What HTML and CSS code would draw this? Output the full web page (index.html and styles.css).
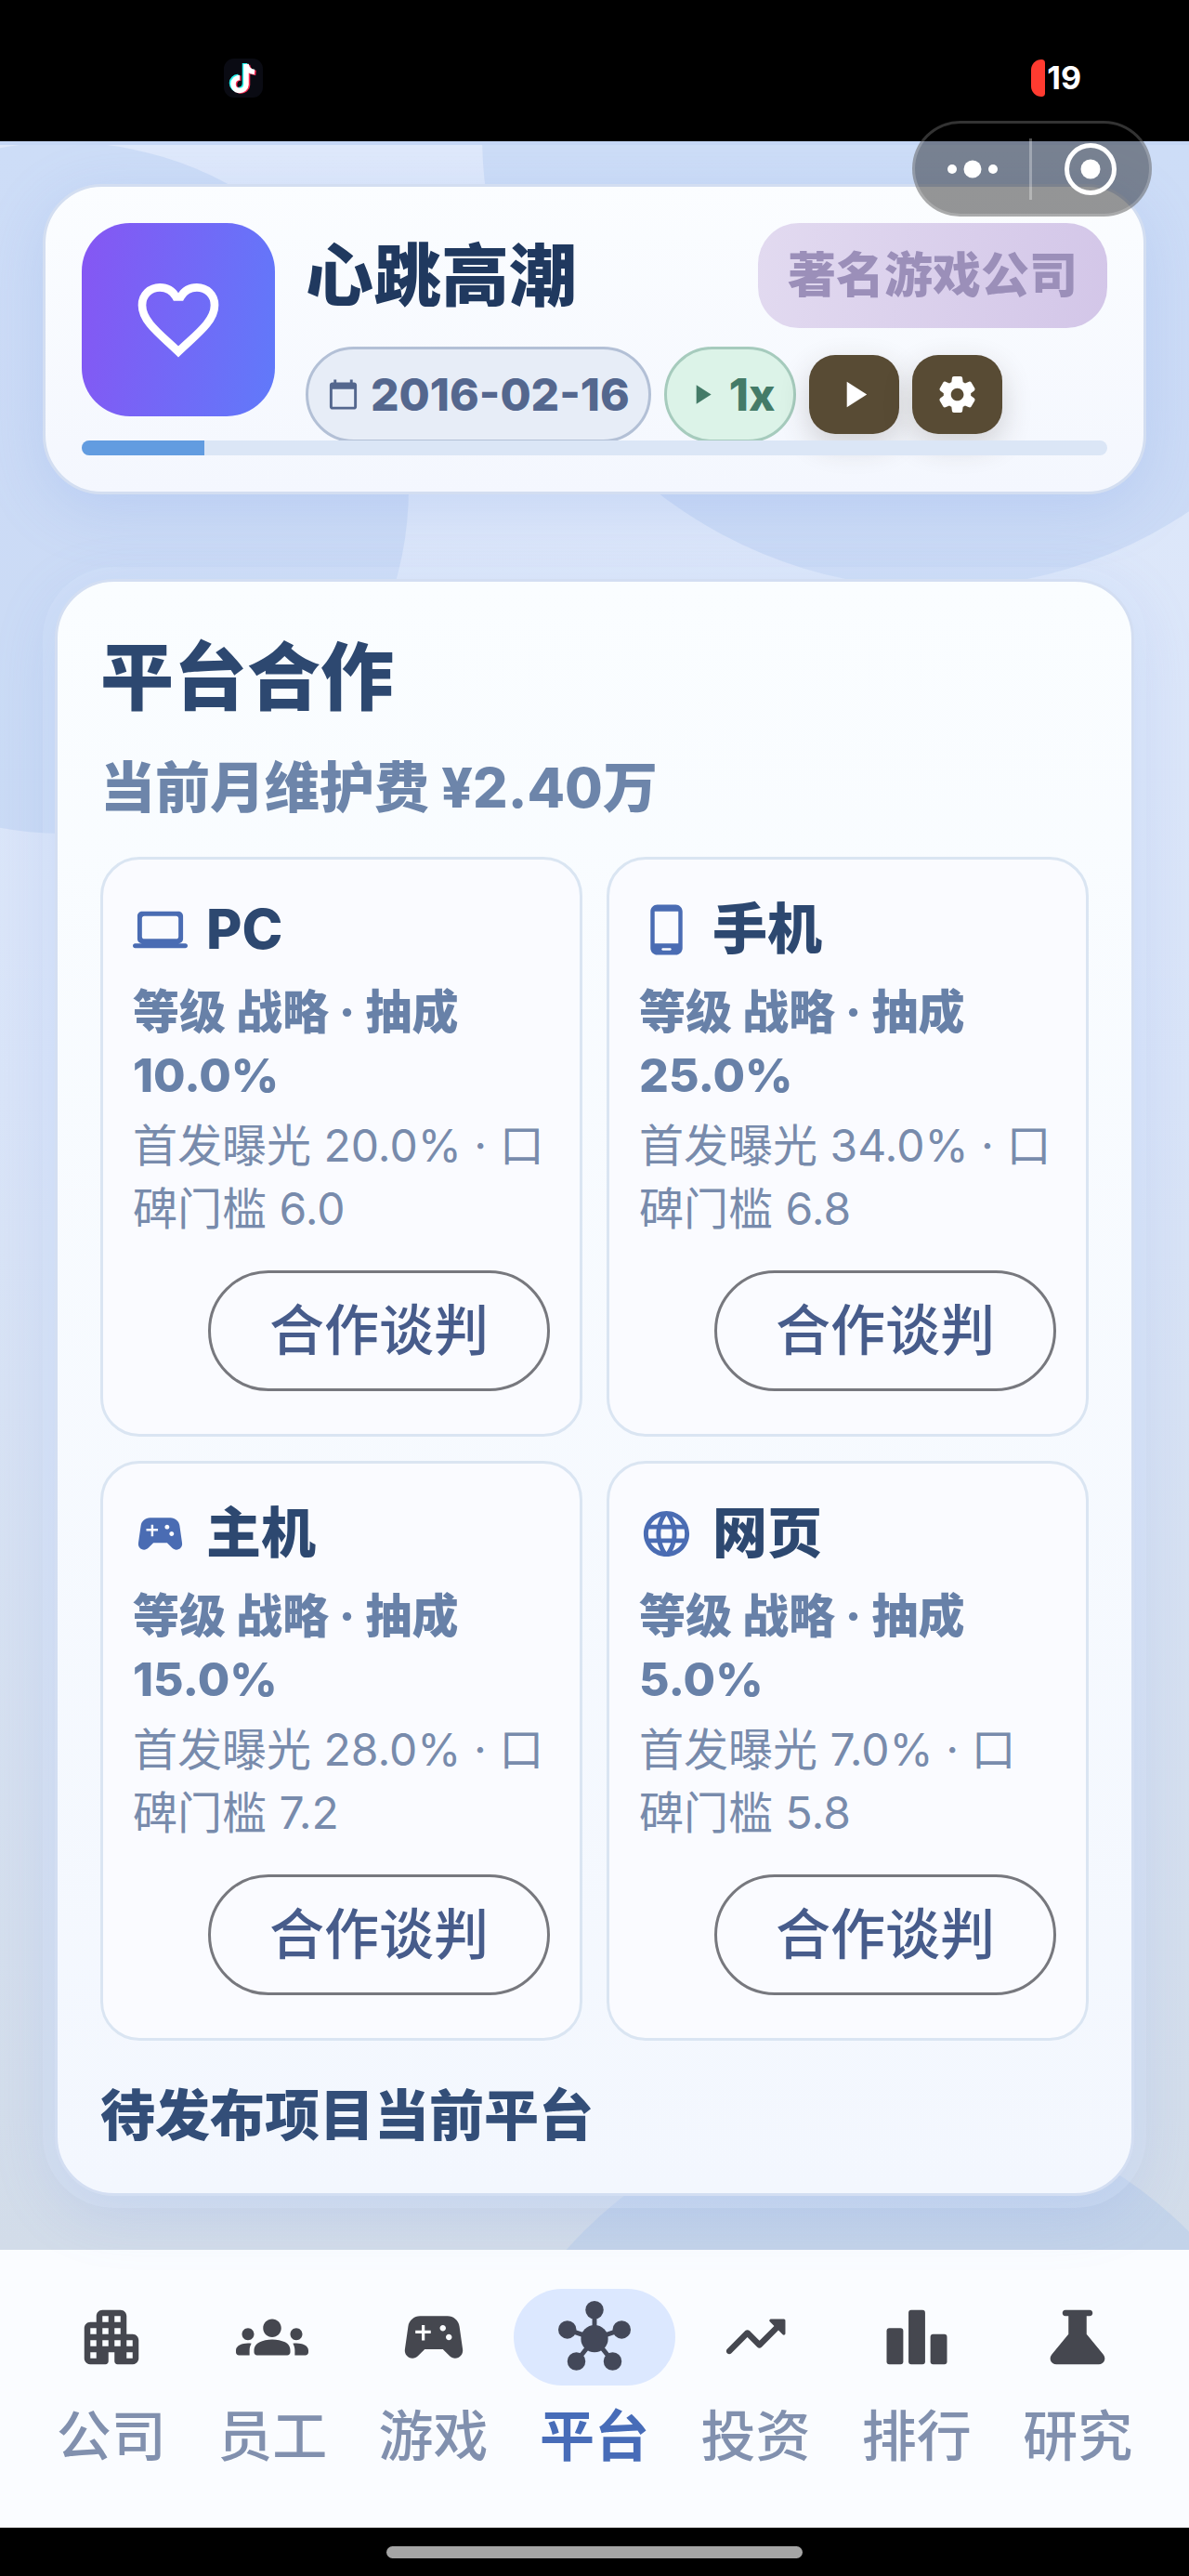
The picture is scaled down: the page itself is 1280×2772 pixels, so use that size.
FILE: index.html
```html
<!DOCTYPE html>
<html lang="zh-CN">
<head>
    <meta charset="UTF-8">
    <meta name="viewport" content="width=device-width, initial-scale=1.0">
    <title>平台合作</title>
    <link rel="stylesheet" href="styles.css">
</head>
<body>
    <!-- Shared icon shapes -->
    <svg class="icon-defs" aria-hidden="true">
        <symbol id="icon-gamepad" viewBox="0 0 24 24">
            <path fill-rule="evenodd" d="M21.58 16.09l-1.09-7.66C20.21 6.46 18.52 5 16.53 5H7.47C5.48 5 3.79 6.46 3.51 8.43l-1.09 7.66C2.2 17.63 3.39 19 4.94 19c.68 0 1.32-.27 1.8-.75L9 16h6l2.25 2.25c.48.48 1.13.75 1.8.75 1.56 0 2.75-1.37 2.53-2.91zM11 10.8H9v2.3H8v-2.3H5.9v-1H8V8h1v1.8h2v1zM15 10c-.55 0-1-.45-1-1s.45-1 1-1 1 .45 1 1-.45 1-1 1zm2 3c-.55 0-1-.45-1-1s.45-1 1-1 1 .45 1 1-.45 1-1 1z"/>
        </symbol>
        <symbol id="icon-play" viewBox="0 0 24 24">
            <path d="M8 5v14l11-7z"/>
        </symbol>
    </svg>

    <div class="screen">
        <div class="status-bar">
            <svg class="tiktok" viewBox="0 0 42 42" role="img" aria-label="抖音">
                <rect width="42" height="42" rx="11" fill="#0a0b13"/>
                <g fill="none" stroke-width="5.5">
                    <path stroke="#25f4ee" d="M22.5 5v22a7 7 0 1 1-7-7.5M22.5 6c.5 5 4 8 9 8.500"/>
                    <path stroke="#fe2c55" d="M25.500 7v21.500a7 7 0 1 1-7-7.500M25.500 7c.5 5 4 8 9 8.500"/>
                    <path stroke="#fff" d="M24 6v22a7 7 0 1 1-7-7.500M24 6c.5 5 4 8 9 8.500"/>
                </g>
            </svg>
            <div class="battery"><span class="battery-level"></span>19</div>
        </div>

        <main class="stage">
            <div class="backdrop" aria-hidden="true">
                <span class="bubble bubble-left"></span>
                <span class="bubble bubble-right"></span>
                <span class="bubble bubble-bottom"></span>
            </div>

            <header class="company">
                <div class="company-top">
                    <div class="avatar">
                        <svg viewBox="0 0 24 24" aria-hidden="true"><path d="M12 19.950C8 16 3 12.600 3 8.400 3 5.800 5 4 7.400 4c1.700 0 3.200.9 4 2.300h1.200c.8-1.400 2.300-2.300 4-2.300C19 4 21 5.800 21 8.400c0 4.200-5 7.600-9 11.550z"/></svg>
                    </div>
                    <div class="company-info">
                        <div class="name-row">
                            <h1>心跳高潮</h1>
                            <span class="rank">著名游戏公司</span>
                        </div>
                        <div class="chip-row">
                            <span class="chip chip-date">
                                <svg viewBox="0 0 24 24" aria-hidden="true"><path fill-rule="evenodd" d="M20 3h-1V1h-2v2H7V1H5v2H4c-1.100 0-2 .9-2 2v16c0 1.100.9 2 2 2h16c1.100 0 2-.9 2-2V5c0-1.100-.9-2-2-2zm0 18H4V8h16v13z"/></svg>
                                2016-02-16
                            </span>
                            <span class="chip chip-speed">
                                <svg aria-hidden="true"><use href="#icon-play"/></svg>
                                1x
                            </span>
                            <button class="square-btn" type="button" aria-label="播放">
                                <svg aria-hidden="true"><use href="#icon-play"/></svg>
                            </button>
                            <button class="square-btn" type="button" aria-label="设置">
                                <svg viewBox="0 0 24 24" aria-hidden="true"><path fill-rule="evenodd" d="M19.500 12c0-.23-.01-.45-.03-.68l1.860-1.410c.4-.3.51-.86.26-1.300l-1.870-3.230c-.25-.44-.79-.62-1.250-.42l-2.150.91c-.37-.26-.76-.49-1.170-.68l-.29-2.310C14.800 2.380 14.370 2 13.870 2h-3.730c-.51 0-.94.38-1 .88l-.29 2.310c-.41.19-.8.42-1.170.68l-2.150-.91c-.46-.2-1-.02-1.250.42L2.410 8.620c-.25.44-.14.99.26 1.300l1.860 1.410C4.510 11.550 4.500 11.770 4.500 12s.01.45.03.68l-1.860 1.410c-.4.3-.51.86-.26 1.300l1.870 3.230c.25.44.79.62 1.250.42l2.150-.91c.37.26.76.49 1.170.68l.29 2.310c.06.5.49.88.99.88h3.730c.5 0 .93-.38.99-.88l.29-2.310c.41-.19.8-.42 1.170-.68l2.150.91c.46.2 1 .02 1.250-.42l1.870-3.230c.25-.44.14-.99-.26-1.300l-1.860-1.410c.03-.23.04-.45.04-.68zm-7.460 3.500c-1.930 0-3.500-1.570-3.500-3.500s1.570-3.500 3.500-3.500 3.500 1.570 3.500 3.500-1.570 3.500-3.500 3.500z"/></svg>
                            </button>
                        </div>
                    </div>
                </div>
                <div class="progress"><div class="progress-fill" style="width: 12%"></div></div>
            </header>

            <section class="panel">
                <h2>平台合作</h2>
                <p class="fee">当前月维护费 ¥2.40万</p>

                <div class="platforms">
                    <article class="platform">
                        <h3>
                            <svg viewBox="0 0 24 24" aria-hidden="true"><path fill-rule="evenodd" d="M20 18c1.100 0 2-.9 2-2V6c0-1.100-.9-2-2-2H4c-1.100 0-2 .9-2 2v10c0 1.100.9 2 2 2H1c-.55 0-1 .45-1 1s.45 1 1 1h22c.55 0 1-.45 1-1s-.45-1-1-1h-3zM5 6h14c.55 0 1 .45 1 1v8c0 .55-.45 1-1 1H5c-.55 0-1-.45-1-1V7c0-.55.45-1 1-1z"/></svg>
                            PC
                        </h3>
                        <p class="level">等级 战略 · 抽成 10.0%</p>
                        <p class="detail">首发曝光 20.0% · 口碑门槛 6.0</p>
                        <button class="deal-btn" type="button">合作谈判</button>
                    </article>

                    <article class="platform">
                        <h3>
                            <svg viewBox="0 0 24 24" aria-hidden="true"><path fill-rule="evenodd" d="M8 1h8c1.660 0 3 1.340 3 3v16c0 1.660-1.340 3-3 3H8c-1.660 0-3-1.340-3-3V4c0-1.660 1.340-3 3-3zM6.800 4v14h10.400V4zM10.400 20c-.7 0-.7 1 0 1h3.200c.7 0 .7-1 0-1z"/></svg>
                            手机
                        </h3>
                        <p class="level">等级 战略 · 抽成 25.0%</p>
                        <p class="detail">首发曝光 34.0% · 口碑门槛 6.8</p>
                        <button class="deal-btn" type="button">合作谈判</button>
                    </article>

                    <article class="platform">
                        <h3>
                            <svg aria-hidden="true"><use href="#icon-gamepad"/></svg>
                            主机
                        </h3>
                        <p class="level">等级 战略 · 抽成 15.0%</p>
                        <p class="detail">首发曝光 28.0% · 口碑门槛 7.2</p>
                        <button class="deal-btn" type="button">合作谈判</button>
                    </article>

                    <article class="platform">
                        <h3>
                            <svg viewBox="0 0 24 24" aria-hidden="true"><path d="M11.990 2C6.470 2 2 6.480 2 12s4.470 10 9.990 10C17.520 22 22 17.520 22 12S17.520 2 11.990 2zm6.930 6h-2.950c-.32-1.250-.78-2.450-1.380-3.560 1.840.63 3.370 1.910 4.330 3.560zM12 4.040c.83 1.200 1.480 2.530 1.910 3.960h-3.820c.43-1.430 1.080-2.760 1.910-3.960zM4.260 14C4.100 13.360 4 12.690 4 12s.1-1.360.26-2h3.380c-.08.66-.14 1.320-.14 2 0 .68.06 1.340.14 2H4.260zm.82 2h2.950c.32 1.250.78 2.450 1.380 3.560-1.840-.63-3.370-1.900-4.330-3.560zm2.950-8H5.080c.96-1.660 2.490-2.930 4.330-3.560C8.810 5.550 8.350 6.750 8.030 8zM12 19.960c-.83-1.200-1.480-2.530-1.910-3.960h3.820c-.43 1.430-1.080 2.760-1.910 3.960zM14.340 14H9.660c-.09-.66-.16-1.320-.16-2 0-.68.07-1.350.16-2h4.680c.09.65.16 1.320.16 2 0 .68-.07 1.340-.16 2zm.25 5.560c.6-1.110 1.060-2.310 1.380-3.560h2.950c-.96 1.650-2.490 2.930-4.330 3.560zM16.360 14c.08-.66.14-1.320.14-2 0-.68-.06-1.340-.14-2h3.380c.16.64.26 1.310.26 2s-.1 1.360-.26 2h-3.380z"/></svg>
                            网页
                        </h3>
                        <p class="level">等级 战略 · 抽成 5.0%</p>
                        <p class="detail">首发曝光 7.0% · 口碑门槛 5.8</p>
                        <button class="deal-btn" type="button">合作谈判</button>
                    </article>
                </div>

                <h2 class="pending">待发布项目当前平台</h2>
            </section>
        </main>

        <nav class="tabs">
            <a class="tab" href="#company">
                <span class="tab-icon"><svg viewBox="0 0 24 24" aria-hidden="true"><path fill-rule="evenodd" d="M17 11V5c0-1.100-.9-2-2-2H9c-1.100 0-2 .9-2 2v2H5c-1.100 0-2 .9-2 2v10c0 1.100.9 2 2 2h5c.55 0 1-.45 1-1v-3h2v3c0 .55.45 1 1 1h5c1.100 0 2-.9 2-2v-6c0-1.100-.9-2-2-2h-2zM7 19H5v-2h2v2zm0-4H5v-2h2v2zm0-4H5V9h2v2zm4 4H9v-2h2v2zm0-4H9V9h2v2zm0-4H9V5h2v2zm4 8h-2v-2h2v2zm0-4h-2V9h2v2zm0-4h-2V5h2v2zm4 12h-2v-2h2v2zm0-4h-2v-2h2v2z"/></svg></span>
                公司
            </a>
            <a class="tab" href="#staff">
                <span class="tab-icon"><svg viewBox="0 0 24 24" aria-hidden="true"><path d="M12 12.750c1.630 0 3.070.39 4.240.9 1.080.48 1.760 1.560 1.760 2.730V17c0 .55-.45 1-1 1H7c-.55 0-1-.45-1-1v-.61c0-1.180.68-2.260 1.760-2.730 1.170-.52 2.610-.91 4.240-.91zM4 13c1.100 0 2-.9 2-2s-.9-2-2-2-2 .9-2 2 .9 2 2 2zm1.130 1.100C4.760 14.040 4.390 14 4 14c-.99 0-1.930.21-2.780.58C.48 14.900 0 15.620 0 16.430V17c0 .55.45 1 1 1h3.500v-1.610c0-.83.23-1.610.63-2.290zM20 13c1.100 0 2-.9 2-2s-.9-2-2-2-2 .9-2 2 .9 2 2 2zm4 3.430c0-.81-.48-1.530-1.220-1.850-.85-.37-1.790-.58-2.780-.58-.39 0-.76.04-1.130.1.4.68.63 1.460.63 2.290V18H23c.55 0 1-.45 1-1v-.57zM12 6c1.660 0 3 1.340 3 3s-1.340 3-3 3-3-1.340-3-3 1.340-3 3-3z"/></svg></span>
                员工
            </a>
            <a class="tab" href="#games">
                <span class="tab-icon"><svg aria-hidden="true"><use href="#icon-gamepad"/></svg></span>
                游戏
            </a>
            <a class="tab active" href="#platforms" aria-current="page">
                <span class="tab-icon"><svg viewBox="0 0 24 24" aria-hidden="true"><path fill="none" stroke="currentColor" stroke-width="1.500" d="M12 12.500V3M12 12.500L3 9.500M12 12.500l9-3M12 12.500L6 20M12 12.500l6 7.500"/><circle cx="12" cy="12.500" r="4.500"/><circle cx="12" cy="3" r="3"/><circle cx="3" cy="9.500" r="3"/><circle cx="21" cy="9.500" r="3"/><circle cx="6" cy="20" r="3"/><circle cx="18" cy="20" r="3"/></svg></span>
                平台
            </a>
            <a class="tab" href="#invest">
                <span class="tab-icon"><svg viewBox="0 0 24 24" aria-hidden="true"><path d="M16.850 6.850l1.440 1.440-4.880 4.880-3.290-3.290c-.39-.39-1.020-.39-1.410 0l-6 6.010c-.39.39-.39 1.020 0 1.410.39.39 1.020.39 1.410 0L9.410 12l3.290 3.290c.39.39 1.020.39 1.410 0l5.590-5.580 1.440 1.440c.31.31.85.09.85-.35V6.500c.01-.28-.21-.5-.49-.5h-4.290c-.45 0-.67.54-.36.85z"/></svg></span>
                投资
            </a>
            <a class="tab" href="#ranking">
                <span class="tab-icon"><svg viewBox="0 0 24 24" aria-hidden="true"><rect x="2" y="9" width="5.500" height="12" rx=".9"/><rect x="9.250" y="3" width="5.500" height="18" rx=".9"/><rect x="16.500" y="11" width="5.500" height="10" rx=".9"/></svg></span>
                排行
            </a>
            <a class="tab" href="#research">
                <span class="tab-icon"><svg viewBox="0 0 24 24" aria-hidden="true"><path d="M8 3h8c1.330 0 1.330 2 0 2h-1v6l5.500 6.700c1.200 1.500.2 3.300-1.500 3.300H5c-1.700 0-2.700-1.800-1.500-3.300L9 11V5H8C6.670 5 6.670 3 8 3z"/></svg></span>
                研究
            </a>
        </nav>

        <div class="home-bar"><span class="home-pill"></span></div>

        <!-- Mini-program capsule floats over the status bar and header -->
        <div class="capsule">
            <button type="button" aria-label="更多">
                <svg viewBox="0 0 60 60" aria-hidden="true"><circle cx="8" cy="30" r="5"/><circle cx="30" cy="30" r="9.500"/><circle cx="52" cy="30" r="5"/></svg>
            </button>
            <button type="button" aria-label="关闭">
                <svg viewBox="0 0 60 60" aria-hidden="true"><circle cx="30" cy="30" r="25.500" fill="none" stroke="currentColor" stroke-width="5"/><circle cx="30" cy="30" r="10.500"/></svg>
            </button>
        </div>
    </div>
</body>
</html>
```
FILE: styles.css
```css
* {
    box-sizing: border-box;
}

body {
    margin: 0;
    background-color: #000;
    font-family: Inter, 'Noto Sans CJK SC', sans-serif;
}

h1, h2, h3, p {
    margin: 0;
}

button {
    margin: 0;
    padding: 0;
    border: none;
    background: none;
    font-family: inherit;
    cursor: pointer;
}

svg {
    display: block;
    fill: currentColor;
}

.icon-defs {
    position: absolute;
    width: 0;
    height: 0;
}

.screen {
    position: relative;
    min-height: 100vh;
    display: flex;
    flex-direction: column;
}

/* Status bar */
.status-bar {
    height: 152px;
    padding: 16px 116px 0 241px;
    display: flex;
    align-items: center;
    justify-content: space-between;
    color: #fff;
}

.tiktok {
    width: 42px;
    height: 42px;
}

.battery {
    display: flex;
    align-items: center;
    gap: 2px;
    font-size: 34px;
    font-weight: 700;
    line-height: 40px;
}

.battery-level {
    width: 15px;
    height: 40px;
    border-radius: 12px 4px 4px 12px;
    background-color: #ff3b30;
}

.capsule {
    position: absolute;
    top: 130px;
    right: 40px;
    width: 258px;
    height: 103px;
    display: flex;
    align-items: center;
    border: 3px solid rgba(255, 255, 255, 0.2);
    border-radius: 52px;
    background-color: rgba(0, 0, 0, 0.41);
    color: #fff;
}

.capsule button {
    width: 123px;
    height: 66px;
    display: flex;
    align-items: center;
    justify-content: center;
    color: inherit;
}

.capsule button + button {
    flex: 1;
    border-left: 3px solid rgba(255, 255, 255, 0.3);
}

.capsule svg {
    width: 60px;
    height: 60px;
}

/* Page area */
.stage {
    position: relative;
    z-index: 0;
    flex: 1;
    padding: 46px 46px 58px;
    background: linear-gradient(#dfe9fb 0%, #d9e4f8 45%, #d2dce9 100%);
}

.backdrop {
    position: absolute;
    inset: 0;
    z-index: -1;
    overflow: hidden;
    border-top: 4px solid rgba(160, 190, 240, 0.4);
}

.bubble {
    position: absolute;
    border-radius: 50%;
    background-color: rgba(150, 185, 235, 0.24);
}

.bubble-left {
    top: -3px;
    left: -304px;
    width: 744px;
    height: 744px;
}

.bubble-right {
    top: -501px;
    right: -217px;
    width: 978px;
    height: 978px;
}

.bubble-bottom {
    right: -134px;
    bottom: -765px;
    width: 920px;
    height: 920px;
}

/* Company header */
.company {
    padding: 39px;
    border: 3px solid #d3def1;
    border-radius: 64px;
    background: linear-gradient(#fbfdff, #f4f7fe);
    box-shadow: 0 16px 64px rgba(120, 155, 230, 0.22);
}

.company-top {
    display: flex;
    gap: 33px;
}

.avatar {
    flex: none;
    width: 208px;
    height: 208px;
    display: flex;
    align-items: center;
    justify-content: center;
    border-radius: 52px;
    background: linear-gradient(100deg, #8656f3, #607afa);
}

.avatar svg {
    width: 104px;
    height: 104px;
    fill: none;
    stroke: #fff;
    stroke-width: 2;
}

.company-info {
    flex: 1;
    min-width: 0;
}

.name-row {
    display: flex;
    align-items: center;
    justify-content: space-between;
    margin-bottom: 20px;
}

h1 {
    font-size: 73px;
    font-weight: 900;
    line-height: 104px;
    color: #20395f;
}

.rank {
    padding: 16px 32px;
    border-radius: 44px;
    background: linear-gradient(100deg, #e2daf0, #d3c6e8);
    font-size: 52px;
    font-weight: 900;
    line-height: 81px;
    color: #9b8fb9;
}

.chip-row {
    display: flex;
    align-items: center;
    gap: 14px;
}

.chip {
    display: flex;
    align-items: center;
    gap: 12px;
    padding: 16px 20px;
    border: 3px solid;
    border-radius: 52px;
    font-size: 48px;
    font-weight: 800;
    line-height: 65px;
    white-space: nowrap;
}

.chip svg {
    width: 35px;
    height: 35px;
}

.chip-date {
    border-color: #b3c0d6;
    background-color: #e7edf7;
    color: #54678e;
}

.chip-speed {
    border-color: #a6cbbd;
    background-color: #dcf3e8;
    color: #447b68;
}

.square-btn {
    width: 97px;
    height: 85px;
    display: flex;
    align-items: center;
    justify-content: center;
    border-radius: 28px;
    background-color: #584b34;
    box-shadow: 0 12px 32px rgba(60, 50, 40, 0.2);
    color: #fff;
}

.square-btn svg {
    width: 47px;
    height: 47px;
}

/* The bar overlaps the lower edge of the chips */
.progress {
    position: relative;
    height: 16px;
    margin-top: -2px;
    border-radius: 8px;
    background-color: #dbe6f6;
    overflow: hidden;
}

.progress-fill {
    height: 100%;
    background-color: #629ce0;
}

/* Platform panel */
.panel {
    margin: 91px 13px 0;
    padding: 51px 46px 43px;
    border: 3px solid #d3def2;
    border-radius: 64px;
    background: linear-gradient(#fafdff, #f3f7fe);
    box-shadow: 0 0 0 13px rgba(225, 235, 255, 0.22), 0 16px 64px rgba(120, 150, 230, 0.22);
}

h2 {
    font-size: 79px;
    font-weight: 900;
    line-height: 104px;
    color: #2d4870;
}

.fee {
    margin: 27px 0 34px;
    font-size: 59px;
    font-weight: 800;
    line-height: 80px;
    color: #6d85aa;
}

.platforms {
    display: grid;
    grid-template-columns: 1fr 1fr;
    gap: 26px;
}

.platform {
    padding: 36px 32px 46px;
    border: 3px solid #dae5f2;
    border-radius: 42px;
    background-color: #fafbff;
}

h3 {
    display: flex;
    align-items: center;
    gap: 20px;
    margin-bottom: 16px;
    font-size: 59px;
    font-weight: 800;
    line-height: 78px;
    color: #2d4870;
}

h3 svg {
    width: 59px;
    height: 59px;
    color: #4a6cb3;
}

.level {
    margin-bottom: 8px;
    font-size: 50px;
    font-weight: 800;
    line-height: 68px;
    color: #6881a8;
}

.detail {
    font-size: 48px;
    line-height: 68px;
    color: #788bac;
}

.deal-btn {
    display: block;
    margin: 32px 0 0 auto;
    padding: 22px 63px;
    border: 3px solid #77787e;
    border-radius: 65px;
    font-size: 59px;
    font-weight: 500;
    line-height: 80px;
    color: #475c8b;
}

.pending {
    margin-top: 41px;
    font-size: 59px;
    line-height: 80px;
    color: #334e78;
}

/* Bottom tabs */
.tabs {
    display: flex;
    padding: 42px 33px 58px;
    background-color: #fafcff;
}

.tab {
    flex: 1;
    display: flex;
    flex-direction: column;
    gap: 15px;
    font-size: 59px;
    font-weight: 500;
    line-height: 80px;
    text-align: center;
    text-decoration: none;
    color: #8190ae;
}

.tab-icon {
    height: 104px;
    display: flex;
    align-items: center;
    justify-content: center;
    border-radius: 52px;
    color: #45474f;
}

.tab-icon svg {
    width: 78px;
    height: 78px;
    overflow: visible;
}

.tab.active {
    font-weight: 700;
    color: #476cb8;
}

.active .tab-icon {
    background-color: #dce8ff;
    color: #434859;
}

.home-bar {
    height: 52px;
    display: flex;
    align-items: center;
    justify-content: center;
}

.home-pill {
    width: 35%;
    height: 13px;
    border-radius: 7px;
    background-color: #a5a5a5;
}
```
